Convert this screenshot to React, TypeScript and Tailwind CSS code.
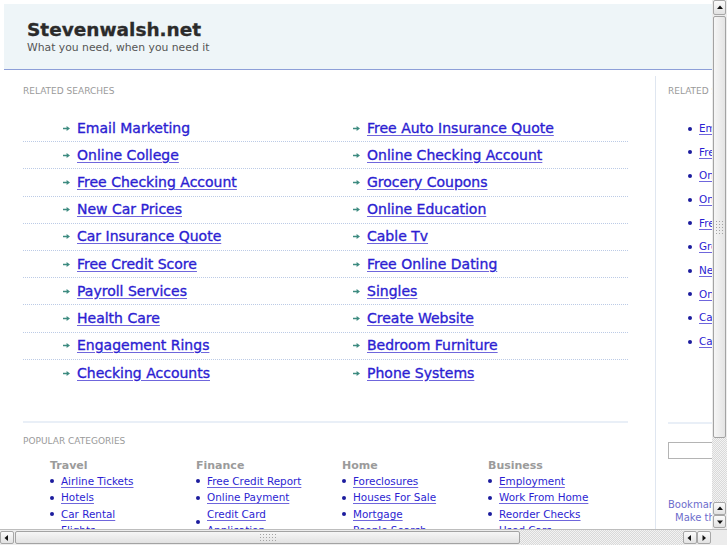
import React from 'react'

const searches: [string, string][] = [
  ['Email Marketing', 'Free Auto Insurance Quote'],
  ['Online College', 'Online Checking Account'],
  ['Free Checking Account', 'Grocery Coupons'],
  ['New Car Prices', 'Online Education'],
  ['Car Insurance Quote', 'Cable Tv'],
  ['Free Credit Score', 'Free Online Dating'],
  ['Payroll Services', 'Singles'],
  ['Health Care', 'Create Website'],
  ['Engagement Rings', 'Bedroom Furniture'],
  ['Checking Accounts', 'Phone Systems'],
]

const categories = [
  { title: 'Travel', links: ['Airline Tickets', 'Hotels', 'Car Rental', 'Flights'] },
  { title: 'Finance', links: ['Free Credit Report', 'Online Payment', 'Credit Card Application', 'Insurance'] },
  { title: 'Home', links: ['Foreclosures', 'Houses For Sale', 'Mortgage', 'People Search'] },
  { title: 'Business', links: ['Employment', 'Work From Home', 'Reorder Checks', 'Used Cars'] },
]

const sidebar = [
  'Email Marketing',
  'Free Auto Insurance Quote',
  'Online College',
  'Online Checking Account',
  'Free Checking Account',
  'Grocery Coupons',
  'New Car Prices',
  'Online Education',
  'Car Insurance Quote',
  'Cable Tv',
]

function Arrow() {
  return (
    <svg width="7" height="7" viewBox="0 0 7 7" className="shrink-0">
      <path d="M0 2.8h3.6V1L7 3.5 3.6 6V4.2H0z" fill="#3d8b80" />
    </svg>
  )
}

function SearchLink({ text, plain }: { text: string; plain?: boolean }) {
  return (
    <span className="flex items-center gap-[7px]">
      <Arrow />
      <a
        href="#"
        className={`text-[14px] leading-[17px] text-[#2c1ed2] [-webkit-text-stroke:0.35px] ${plain ? 'no-underline' : 'underline decoration-[#6f66dc] underline-offset-2'}`}
      >
        {text}
      </a>
    </span>
  )
}

function Tri({ dir }: { dir: 'up' | 'down' | 'left' | 'right' }) {
  const d = {
    up: 'M1 5L4 1.5 7 5z',
    down: 'M1 2.5L4 6 7 2.5z',
    left: 'M5 1L1.5 4 5 7z',
    right: 'M2.5 1L6 4 2.5 7z',
  }[dir]
  return (
    <svg width="8" height="8" viewBox="0 0 8 8">
      <path d={d} fill="#111" />
    </svg>
  )
}

function ScrollButton({ dir, className = '' }: { dir: 'up' | 'down' | 'left' | 'right'; className?: string }) {
  return (
    <div
      className={`flex items-center justify-center border border-[#a7a7a7] rounded-[2px] bg-gradient-to-b from-[#fbfbfb] to-[#e2e2e2] ${className}`}
    >
      <Tri dir={dir} />
    </div>
  )
}

const track =
  'bg-[repeating-conic-gradient(#d9d9d9_0%_25%,#f3f3f3_0%_50%)] bg-[length:2px_2px]'
const grip = 'bg-[radial-gradient(#a3a3a3_0.7px,transparent_0.9px)] bg-[length:3px_3px]'

function VScroll() {
  return (
    <div className="w-[15px] flex flex-col bg-[#ececec]">
      <ScrollButton dir="up" className="h-[15px] mx-[1px]" />
      <div className="h-[422px] mx-[1px] mt-[1px] border border-[#a3a3a3] rounded-[2px] bg-gradient-to-r from-[#f6f6f6] to-[#e4e4e4] flex items-center justify-center">
        <div className={`w-[9px] h-[15px] ${grip}`} />
      </div>
      <div className={`flex-1 ${track}`} />
      <ScrollButton dir="up" className="h-[13px] mx-[1px]" />
      <ScrollButton dir="down" className="h-[13px] mx-[1px] mb-[1px]" />
    </div>
  )
}

function HScroll() {
  return (
    <div className="h-[16px] flex bg-[#ececec] border-t border-[#bdbdbd]">
      <ScrollButton dir="left" className="w-[14px] my-[1px]" />
      <div className="w-[505px] my-[1px] ml-[1px] border border-[#a3a3a3] rounded-[2px] bg-gradient-to-b from-[#f6f6f6] to-[#e2e2e2] flex items-center pl-[243px]">
        <div className={`w-[17px] h-[9px] ${grip}`} />
      </div>
      <div className={`flex-1 ${track}`} />
      <ScrollButton dir="left" className="w-[14px] my-[1px]" />
      <ScrollButton dir="right" className="w-[14px] my-[1px] mr-[1px]" />
      <div className="w-[15px] bg-[#ececec]" />
    </div>
  )
}

function Page() {
  return (
    <div className="w-[820px] pt-[4px] pl-[4px] text-[#333]">
      {/* header */}
      <div className="h-[66px] bg-[#eef5f8] border-b border-[#8d9fd8] pl-[23px] pt-[14px]">
        <h1 className="text-[18.5px] leading-[23px] font-bold text-[#2b2b2b] [-webkit-text-stroke:0.3px]">Stevenwalsh.net</h1>
        <p className="text-[10.8px] leading-[13px] text-[#555]">What you need, when you need it</p>
      </div>

      <div className="flex">
        {/* main column */}
        <div className="w-[652px] mt-[6px] border-r border-[#dfe6f0] pl-[19px] pt-[9px]">
          <div className="text-[9px] leading-[12px] text-[#9a9a9a] uppercase">Related Searches</div>

          <div className="w-[605px] mt-[18px]">
            {searches.map(([a, b], i) => (
              <div
                key={a}
                className={`h-[27.2px] flex items-center ${i < searches.length - 1 ? 'border-b border-dotted border-[#bccbe6]' : ''}`}
              >
                <div className="w-[330px] pl-[40px]">
                  <SearchLink text={a} plain={i === 0} />
                </div>
                <SearchLink text={b} />
              </div>
            ))}
          </div>

          <div className="w-[605px] mt-[34px] border-t-2 border-[#e9eff7] pt-[12px]">
            <div className="text-[9px] leading-[12px] text-[#9a9a9a] uppercase">Popular Categories</div>
            <div className="grid grid-cols-[146px_146px_146px_146px] pl-[27px] mt-[12px]">
              {categories.map((c) => (
                <div key={c.title}>
                  <div className="text-[11px] leading-[13px] font-bold text-[#9b9b9b]">{c.title}</div>
                  <ul className="mt-[1px]">
                    {c.links.map((l) => (
                      <li key={l} className="flex items-center">
                        <span className="w-[4px] h-[4px] rounded-full bg-[#1c1c9e] mr-[7px] shrink-0" />
                        <a
                          href="#"
                          className="max-w-[112px] text-[10.4px] leading-[16.5px] text-[#2c1ed2] underline decoration-[#6f66dc] underline-offset-2"
                        >
                          {l}
                        </a>
                      </li>
                    ))}
                  </ul>
                </div>
              ))}
            </div>
          </div>
        </div>

        {/* sidebar */}
        <div className="w-[150px] mt-[6px] pl-[12px] pt-[9px]">
          <div className="text-[9px] leading-[12px] text-[#9a9a9a] uppercase">Related Searches</div>
          <ul className="mt-[20px] pl-[20px]">
            {sidebar.map((s) => (
              <li key={s} className="h-[23.65px] flex items-center whitespace-nowrap">
                <span className="w-[4px] h-[4px] rounded-full bg-[#1c1c9e] mr-[7px] shrink-0" />
                <a href="#" className="text-[10.4px] text-[#2c1ed2] underline decoration-[#6f66dc] underline-offset-2">
                  {s}
                </a>
              </li>
            ))}
          </ul>
          <div className="mt-[69px] border-t-2 border-[#e9eff7]" />
          <input className="mt-[18px] w-[120px] h-[17px] border border-[#b4b4b4] bg-white" />
          <div className="mt-[35px] text-[10px] leading-[13px] text-[#6d6dcc] whitespace-nowrap">
            <div>Bookmark this page</div>
            <div className="pl-[7px]">Make this your homepage</div>
          </div>
        </div>
      </div>
    </div>
  )
}

export default function App() {
  return (
    <div className="w-[727px] h-[545px] flex flex-col overflow-hidden bg-white font-['DejaVu_Sans',Verdana,sans-serif]">
      <div className="flex flex-1 min-h-0">
        <div className="w-[712px] overflow-hidden">
          <Page />
        </div>
        <VScroll />
      </div>
      <HScroll />
    </div>
  )
}
